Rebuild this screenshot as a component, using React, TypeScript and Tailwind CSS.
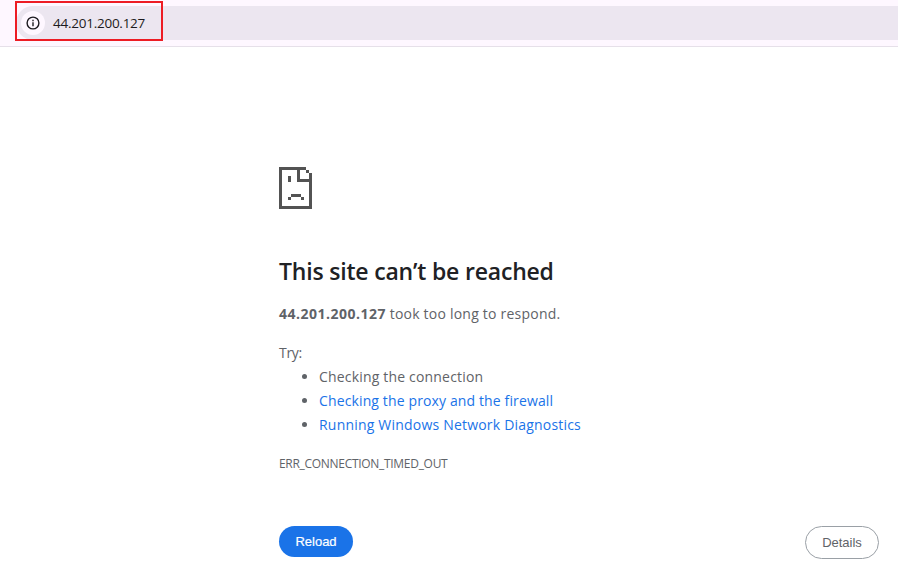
import React from "react";

function SadPageIcon() {
  return (
    <svg width="33" height="42" viewBox="0 0 33 42" shapeRendering="crispEdges" fill="#535353" aria-hidden="true">
      <path d="M0 0H27V3H3V39H30V15H18V3H21V12H30V6H33V42H0Z" />
      <path d="M27 3H30V6H27ZM9 9H12V15H9ZM12 27H22V30H12ZM9 30H12V33H9ZM22 30H25V33H22Z" />
    </svg>
  );
}

function AddressBar() {
  return (
    <header className="relative h-[47px] border-b border-[#e6e0e9] bg-[#fef7ff] pt-1.5 pl-4">
      <div className="flex h-[34px] items-center rounded-l-full bg-[#ece6f0] pl-[5px]">
        <span className="flex size-6 items-center justify-center rounded-full bg-[#fef7ff]">
          <svg width="14" height="14" viewBox="0 0 14 14" fill="none" stroke="#1d1b20" strokeWidth="1.4" aria-hidden="true">
            <circle cx="7" cy="7" r="5.9" />
            <path d="M7 6.2V10.2M7 3.8V5.2" />
          </svg>
        </span>
        <span className="ml-2 text-[13.5px] tracking-[-0.25px] text-[#1d1b20]">44.201.200.127</span>
      </div>
      <div className="absolute top-[1px] left-[15px] h-10 w-[148px] border-2 border-[#ed1c24]" />
    </header>
  );
}

export default function App() {
  return (
    <div className="h-[573px] overflow-hidden bg-white font-['Open_Sans','Noto_Sans',sans-serif] text-[#5f6368]">
      <AddressBar />
      <main className="ml-[279px] w-[600px] pt-[120px] text-[14px] leading-6">
        <SadPageIcon />
        <h1 className="mt-[47px] text-[23px] leading-[30px] font-semibold whitespace-nowrap text-[#202124]">
          <span className="tracking-[-0.19px]">This site can’t be reached</span>
        </h1>
        <p className="mt-4">
          <strong className="font-bold tracking-[0.5px]">44.201.200.127</strong> <span className="tracking-[0.22px]">took too long to respond.</span>
        </p>
        <p className="mt-[15px] tracking-[-0.3px]">Try:</p>
        <ul className="list-disc pl-10">
          <li><span className="tracking-[0.18px]">Checking the connection</span></li>
          <li><a className="tracking-[0.13px] text-[#1a73e8]">Checking the proxy and the firewall</a></li>
          <li><a className="tracking-[0.2px] text-[#1a73e8]">Running Windows Network Diagnostics</a></li>
        </ul>
        <p className="mt-[15px] text-[12px]"><span className="tracking-[-0.3px]">ERR_CONNECTION_TIMED_OUT</span></p>
        <div className="mt-[50px] flex items-start justify-between font-['Liberation_Sans',Arial,sans-serif] text-[13px]">
          <button className="h-[31px] w-[74px] rounded-full bg-[#1a73e8] text-white [-webkit-text-stroke:0.2px_white]">Reload</button>
          <button className="h-[33px] w-[74px] rounded-full border border-[#9aa0a6]">Details</button>
        </div>
      </main>
    </div>
  );
}
